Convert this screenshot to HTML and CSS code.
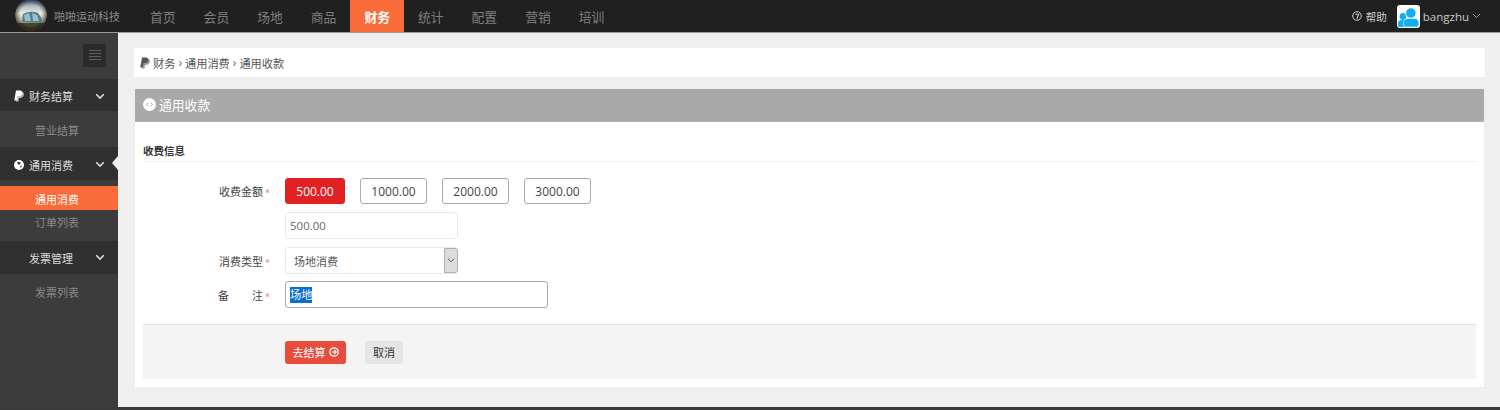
FILE: index.html
```html
<!DOCTYPE html>
<html lang="zh-CN">
<head>
<meta charset="utf-8">
<title>通用收款</title>
<link rel="stylesheet" href="styles.css">
</head>
<body>
<header class="topbar">
  <div class="brand">
    <svg class="brand-logo" width="32" height="32" viewBox="0 0 32 32">
      <defs>
        <clipPath id="logoClip"><circle cx="16" cy="15" r="15.500"/></clipPath>
        <linearGradient id="sky" x1="0" y1="0" x2="0" y2="1"><stop offset="0" stop-color="#54708c"/><stop offset=".22" stop-color="#b9c4c8"/><stop offset=".42" stop-color="#eceadd"/><stop offset=".7" stop-color="#a8a48e"/><stop offset="1" stop-color="#3c3a24"/></linearGradient>
        <radialGradient id="vig" cx=".5" cy=".5" r=".5"><stop offset=".7" stop-color="#000" stop-opacity="0"/><stop offset="1" stop-color="#000" stop-opacity=".5"/></radialGradient>
      </defs>
      <g clip-path="url(#logoClip)">
        <rect width="32" height="32" fill="url(#sky)"/>
        <path d="M7 22 L8 14 Q15 10 23 13 L27 19 L26 23 Z" fill="#4f7f92"/>
        <path d="M9 15 L14 13 L16 21 L10 21 Z M17 13 L22 15 L24 21 L18 21 Z" fill="#9fbcc5"/>
        <rect x="0" y="23" width="32" height="9" fill="#46452d"/>
        <circle cx="16" cy="15" r="15.500" fill="url(#vig)"/>
      </g>
    </svg>
    <span class="brand-name">啪啪运动科技</span>
  </div>
  <nav class="mainnav">
    <a class="nav-item">首页</a>
    <a class="nav-item">会员</a>
    <a class="nav-item">场地</a>
    <a class="nav-item">商品</a>
    <a class="nav-item is-active">财务</a>
    <a class="nav-item">统计</a>
    <a class="nav-item">配置</a>
    <a class="nav-item">营销</a>
    <a class="nav-item">培训</a>
  </nav>
  <div class="top-right">
    <span class="help">
      <svg width="10" height="10" viewBox="0 0 10 10"><circle cx="5" cy="5" r="4.300" fill="none" stroke="#ccc" stroke-width="1"/><path d="M3.400 3.300 H6.600 L5 7.800" fill="none" stroke="#ccc" stroke-width="1.100"/></svg>
      帮助
    </span>
    <svg class="avatar" width="23" height="23" viewBox="0 0 23 23">
      <rect width="23" height="23" rx="3" fill="#fff"/>
      <circle cx="6" cy="11.500" r="3.400" fill="#12aef0"/>
      <path d="M1 18 Q1 15 5 15 L9 15 L7 22 L2.500 22 Q1 22 1 20 Z" fill="#12aef0"/>
      <circle cx="13.800" cy="8" r="5.200" fill="#12aef0" stroke="#fff" stroke-width=".8"/>
      <path d="M6.500 20 Q6 13.500 11 13.500 L17 13.500 Q22.300 13.500 22 19 Q21.800 22 19.500 22 L8.500 22 Q6.500 22 6.500 20 Z" fill="#12aef0" stroke="#fff" stroke-width=".6"/>
    </svg>
    <span class="username">bangzhu</span>
    <svg width="9" height="6" viewBox="0 0 9 6"><path d="M1 1 L4.500 4.500 L8 1" fill="none" stroke="#999" stroke-width="1"/></svg>
  </div>
</header>

<div class="layout">
  <aside class="sidebar">
    <div class="side-tools">
      <button class="side-toggle" type="button" aria-label="菜单">
        <svg width="12" height="13" viewBox="0 0 12 13"><path d="M0 1.500H12M0 4.500H12M0 7.500H12M0 10.500H12" stroke="#5f5f5f" stroke-width="1"/></svg>
      </button>
    </div>
    <div class="side-group g-first">
      <svg class="side-icon" width="10" height="12" viewBox="0 0 10 12"><path d="M3.500 2H8Q10.500 2.300 9.800 5Q9 8 5.800 8H5L4.500 11.500H2Z" fill="#bbb"/><path d="M2 0.500H6Q8.800 0.700 8.300 3.200Q7.800 6 4.500 6H3.500L2.800 10.500H0.300Z" fill="#fff"/></svg>
      <span class="side-label">财务结算</span>
      <svg class="chev" width="10" height="7" viewBox="0 0 10 7"><path d="M1.200 1.200 L5 5 L8.800 1.200" fill="none" stroke="#ddd" stroke-width="1.600"/></svg>
    </div>
    <a class="side-link l-business">营业结算</a>
    <div class="side-group g-open">
      <svg class="side-icon" width="10" height="10" viewBox="0 0 10 10"><circle cx="5" cy="5" r="5" fill="#fff"/><path d="M3 2 L6.500 2 L6 4.500 L4 4.500 Z M6 6 L8 5.500 L7 8 Z" fill="#3a3a3a"/></svg>
      <span class="side-label">通用消费</span>
      <svg class="chev" width="10" height="7" viewBox="0 0 10 7"><path d="M1.200 1.200 L5 5 L8.800 1.200" fill="none" stroke="#ddd" stroke-width="1.600"/></svg>
      <i class="notch"></i>
    </div>
    <a class="side-link is-current">通用消费</a>
    <a class="side-link l-orders">订单列表</a>
    <div class="side-group g-invoice">
      <i class="side-icon"></i>
      <span class="side-label">发票管理</span>
      <svg class="chev" width="10" height="7" viewBox="0 0 10 7"><path d="M1.200 1.200 L5 5 L8.800 1.200" fill="none" stroke="#ddd" stroke-width="1.600"/></svg>
    </div>
    <a class="side-link l-invoice">发票列表</a>
  </aside>

  <main class="content">
    <div class="crumbs">
      <svg width="10" height="12" viewBox="0 0 10 12"><path d="M3.500 2H8Q10.500 2.300 9.800 5Q9 8 5.800 8H5L4.500 11.500H2Z" fill="#999"/><path d="M2 0.500H6Q8.800 0.700 8.300 3.200Q7.800 6 4.500 6H3.500L2.800 10.500H0.300Z" fill="#555"/></svg>
      <span>财务</span><span class="sep">›</span><span>通用消费</span><span class="sep">›</span><span>通用收款</span>
    </div>
    <section class="panel">
      <h1 class="panel-head">
        <svg width="13" height="13" viewBox="0 0 13 13"><circle cx="6.500" cy="6.500" r="6.500" fill="#fff"/><path d="M5.200 4.800 L3.500 6.500 L5.200 8.200 M7.800 4.800 L9.500 6.500 L7.800 8.200" fill="none" stroke="#a9a9a9" stroke-width="1"/></svg>
        通用收款
      </h1>
      <div class="panel-body">
        <h2 class="section-title">收费信息</h2>
        <form class="form">
          <div class="row row-amount">
            <label class="label">收费金额<em>*</em></label>
            <div class="amounts">
              <button class="amount is-picked" type="button">500.00</button>
              <button class="amount" type="button">1000.00</button>
              <button class="amount" type="button">2000.00</button>
              <button class="amount" type="button">3000.00</button>
            </div>
          </div>
          <div class="row row-money">
            <span class="label"></span>
            <input class="field field-money" type="text" value="500.00">
          </div>
          <div class="row row-type">
            <label class="label">消费类型<em>*</em></label>
            <div class="select">
              <span class="select-value">场地消费</span>
              <span class="select-arrow"><svg width="8" height="5" viewBox="0 0 8 5"><path d="M1 0.800 L4 3.800 L7 0.800" fill="none" stroke="#555" stroke-width="1"/></svg></span>
            </div>
          </div>
          <div class="row row-note">
            <label class="label label-spread"><span>备</span><span>注<em>*</em></span></label>
            <div class="field-note"><span class="selected">场地</span></div>
          </div>
        </form>
        <div class="actions">
          <button class="btn btn-go" type="button">去结算
            <svg width="10" height="10" viewBox="0 0 10 10"><circle cx="5" cy="5" r="4.200" fill="none" stroke="#fff" stroke-width="1.300"/><path d="M2.800 5H7M5.200 3L7.200 5L5.200 7" fill="none" stroke="#fff" stroke-width="1.100"/></svg>
          </button>
          <button class="btn btn-cancel" type="button">取消</button>
        </div>
      </div>
    </section>
  </main>
</div>
<div class="bottom-strip"></div>
</body>
</html>
```
FILE: styles.css
```css
* { box-sizing: border-box; }
html, body { margin: 0; height: 410px; overflow: hidden; }
body {
  display: flex;
  flex-direction: column;
  font-family: "Open Sans", "Noto Sans CJK SC", sans-serif;
  font-size: 11px;
  color: #333;
  background: #efefef;
}
a { text-decoration: none; }

.topbar {
  flex: 0 0 33px;
  display: flex;
  align-items: stretch;
  background: #202020;
  border-bottom: 1px solid #9a9a9a;
}
.brand { width: 136px; display: flex; align-items: center; padding-left: 15px; gap: 7px; }
.brand-logo { flex: none; }
.brand-name { font-size: 11px; color: #8c8c8c; white-space: nowrap; }
.mainnav { display: flex; }
.nav-item { width: 53.600px; display: flex; align-items: center; justify-content: center; font-size: 12.800px; color: #7f7f7f; }
.nav-item.is-active { background: #f96b38; color: #fff; font-weight: 700; }
.top-right { margin-left: auto; display: flex; align-items: center; padding-right: 19px; color: #ccc; }
.help { display: flex; align-items: center; gap: 4px; font-size: 10.500px; margin-right: 10px; color: #d0d0d0; }
.avatar { margin-right: 3px; }
.username { font-size: 11.500px; margin-right: 3px; color: #c8c8c8; }

.layout { flex: 1; display: flex; min-height: 0; }

.sidebar { flex: 0 0 118px; background: #3c3c3c; }
.side-tools { height: 46px; padding-top: 11px; display: flex; justify-content: flex-end; padding-right: 12px; }
.side-toggle { width: 23px; height: 23px; padding: 0; border: 0; background: #2b2b2b; display: flex; align-items: center; justify-content: center; }
.side-group { position: relative; height: 33px; background: #303030; display: flex; align-items: center; padding-left: 14px; color: #ddd; font-size: 11px; }
.g-first { height: 32px; padding-top: 2px; }
.g-open { padding-top: 2px; }
.side-icon { width: 10px; flex: none; }
.side-label { margin-left: 5px; flex: 1; }
.chev { margin-right: 13px; }
.notch { position: absolute; right: 0; top: 9px; width: 0; height: 0; border: 7px solid transparent; border-left-width: 0; border-right: 6px solid #efefef; }
.side-link { display: flex; align-items: center; justify-content: flex-start; padding-left: 35px; color: #8a8a8a; font-size: 11px; }
.l-business { height: 36px; padding-top: 2px; }
.is-current { height: 24px; margin-top: 6px; padding-top: 2px; background: #f96b38; color: #fff; }
.l-orders { height: 27px; margin-bottom: 4px; padding-bottom: 4px; }
.l-invoice { height: 38px; padding-bottom: 2px; }

.content { flex: 1; padding: 15px 15px 0 16px; min-width: 0; }
.crumbs { height: 29px; background: #fff; display: flex; align-items: center; gap: 3px; padding-left: 6px; color: #555; font-size: 11.200px; }
.crumbs .sep { color: #666; font-size: 12px; }
.panel { margin: 12px 1px 0; height: 298px; background: #fff; }
.panel-head { margin: 0; height: 33px; padding: 0 0 1px 8px; display: flex; align-items: center; gap: 3px; background: #a9a9a9; color: #fff; font-size: 12.800px; font-weight: 400; border-bottom: 1px solid #b5b5b5; }
.panel-body { padding: 0 8px; }
.section-title { margin: 0; height: 40px; padding-top: 21px; line-height: 16px; font-size: 10.500px; font-weight: 700; color: #333; border-bottom: 1px solid #efefef; }

.form { height: 162px; padding-top: 16px; }
.row { display: flex; align-items: center; }
.label { width: 127px; flex: none; margin-right: 15px; padding-left: 76px; font-size: 11px; font-weight: 400; color: #444; white-space: nowrap; }
.label em { color: #e77; font-style: normal; font-size: 9px; margin-left: 2px; }
.label-spread { display: flex; justify-content: space-between; padding-left: 75px; }
.row-money { margin-top: 8px; }
.row-type { margin-top: 8px; }
.row-note { margin-top: 7px; }
.amounts { display: flex; gap: 15px; }
.amount { height: 26px; width: 67px; padding: 0; border: 1px solid #a9a9a9; border-radius: 3px; background: #fff; color: #444; font: 12px "Open Sans", sans-serif; }
.amount.is-picked { width: 60px; background: #e22222; border-color: #e22222; color: #fff; }
.field { width: 173px; height: 27px; padding: 0 4px; border: 1px solid #e8e8e8; border-radius: 3px; background: #fff; color: #666; font: 11.500px "Open Sans", sans-serif; outline: 0; }
.select { position: relative; width: 173px; height: 27px; padding: 0 8px; border: 1px solid #e8e8e8; border-radius: 3px; display: flex; align-items: center; color: #555; font-size: 11px; }
.select-arrow { position: absolute; top: 0; right: -1px; bottom: 0; width: 14px; display: flex; align-items: center; justify-content: center; background: #dcdcdc; border: 1px solid #b0b0b0; border-radius: 0 3px 3px 0; }
.field-note { width: 263px; height: 27px; padding-left: 4px; border: 1px solid #a9a9a9; border-radius: 3px; display: flex; align-items: center; font-size: 11.200px; }
.selected { background: #0a6fd0; color: #fff; line-height: 16px; }

.actions { height: 55px; display: flex; align-items: center; gap: 19px; padding-left: 142px; background: #f4f4f4; border-top: 1px solid #e2e2e2; }
.btn { height: 23px; padding: 0; border: 0; border-radius: 3px; font: 11px "Open Sans", "Noto Sans CJK SC", sans-serif; display: flex; align-items: center; justify-content: center; gap: 3px; }
.btn-go { width: 61px; background: #e74c3c; color: #fff; }
.btn-cancel { width: 38px; background: #e5e5e5; color: #333; }

.bottom-strip { flex: 0 0 3px; background: #3a3a3a; }
```
